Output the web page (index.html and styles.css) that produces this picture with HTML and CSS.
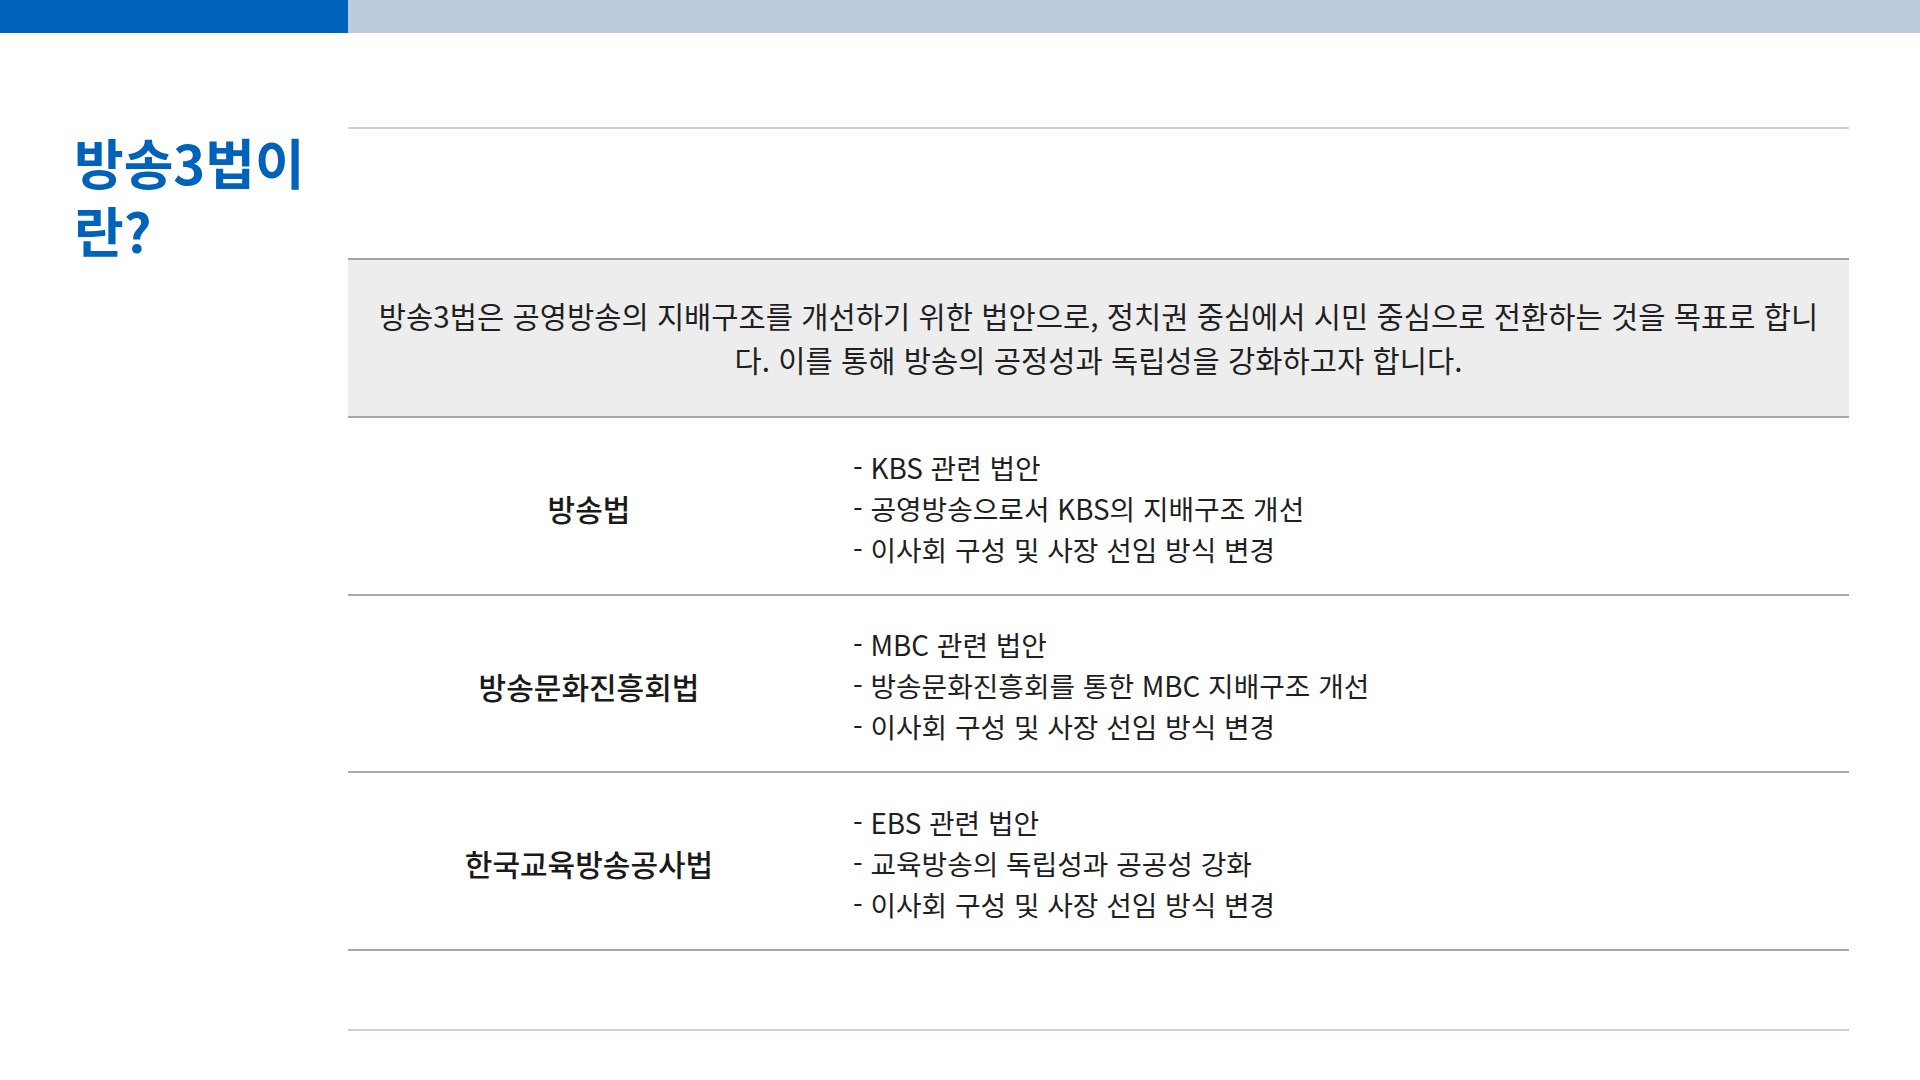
FILE: index.html
```html
<!DOCTYPE html>
<html lang="ko">
<head>
<meta charset="utf-8">
<title>방송3법이란?</title>
<link rel="stylesheet" href="styles.css">
</head>
<body>
<div class="topbar"><div class="topbar-accent"></div><div class="topbar-rest"></div></div>
<div class="main">
  <div class="side">
    <h1 class="title">방송3법이란?</h1>
  </div>
  <div class="content">
    <div class="spacer-top"></div>
    <div class="summary">
      <p>방송3법은 공영방송의 지배구조를 개선하기 위한 법안으로, 정치권 중심에서 시민 중심으로 전환하는 것을 목표로 합니다. 이를 통해 방송의 공정성과 독립성을 강화하고자 합니다.</p>
    </div>
    <div class="row">
      <div class="label">방송법</div>
      <ul class="desc">
        <li>- KBS 관련 법안</li>
        <li>- 공영방송으로서 KBS의 지배구조 개선</li>
        <li>- 이사회 구성 및 사장 선임 방식 변경</li>
      </ul>
    </div>
    <div class="row">
      <div class="label">방송문화진흥회법</div>
      <ul class="desc">
        <li>- MBC 관련 법안</li>
        <li>- 방송문화진흥회를 통한 MBC 지배구조 개선</li>
        <li>- 이사회 구성 및 사장 선임 방식 변경</li>
      </ul>
    </div>
    <div class="row">
      <div class="label">한국교육방송공사법</div>
      <ul class="desc">
        <li>- EBS 관련 법안</li>
        <li>- 교육방송의 독립성과 공공성 강화</li>
        <li>- 이사회 구성 및 사장 선임 방식 변경</li>
      </ul>
    </div>
    <div class="spacer-bottom"></div>
  </div>
</div>
</body>
</html>
```

FILE: styles.css
```css
* { box-sizing: border-box; }
html, body { margin: 0; padding: 0; background: #ffffff; }
body {
  font-family: "Noto Sans CJK KR", "Noto Sans", sans-serif;
  color: #1a1a1a;
  width: 1920px;
  height: 1080px;
  overflow: hidden;
}
.topbar { display: flex; height: 33px; }
.topbar-accent { width: 348px; background: #0062b8; }
.topbar-rest { flex: 1; background: #bccbdb; }

.main { display: flex; }
.side { width: 348px; padding: 0 8px 0 74px; }
.title {
  margin: 95px 0 0;
  font-size: 54px;
  line-height: 68px;
  font-weight: 700;
  color: #0062b8;
}
.content { width: 1501px; margin-top: 94px; }
.spacer-top { height: 131px; border-top: 2px solid #c3d0de; }
.summary {
  background: #ededed;
  border-top: 2px solid #a3a3a3;
  border-bottom: 2px solid #a8a8a8;
  height: 160px;
  padding: 0 28px;
  display: flex;
  align-items: center;
  justify-content: center;
}
.summary p {
  margin: 0;
  font-size: 29.6px;
  line-height: 44px;
  text-align: center;
  color: #1f1f1f;
}
.row {
  display: grid;
  grid-template-columns: 482px 1fr;
  align-items: center;
  height: 177.5px;
  border-bottom: 2px solid #a8a8a8;
}
.label {
  text-align: center;
  font-size: 30px;
  font-weight: 500;
  color: #1a1a1a;
  padding-top: 5px;
}
.desc {
  list-style: none;
  margin: 0;
  padding: 5px 0 0 23px;
  font-size: 27.8px;
  line-height: 41px;
  color: #1f1f1f;
}
.spacer-bottom { height: 80px; border-bottom: 2px solid #c3d0de; }
```
